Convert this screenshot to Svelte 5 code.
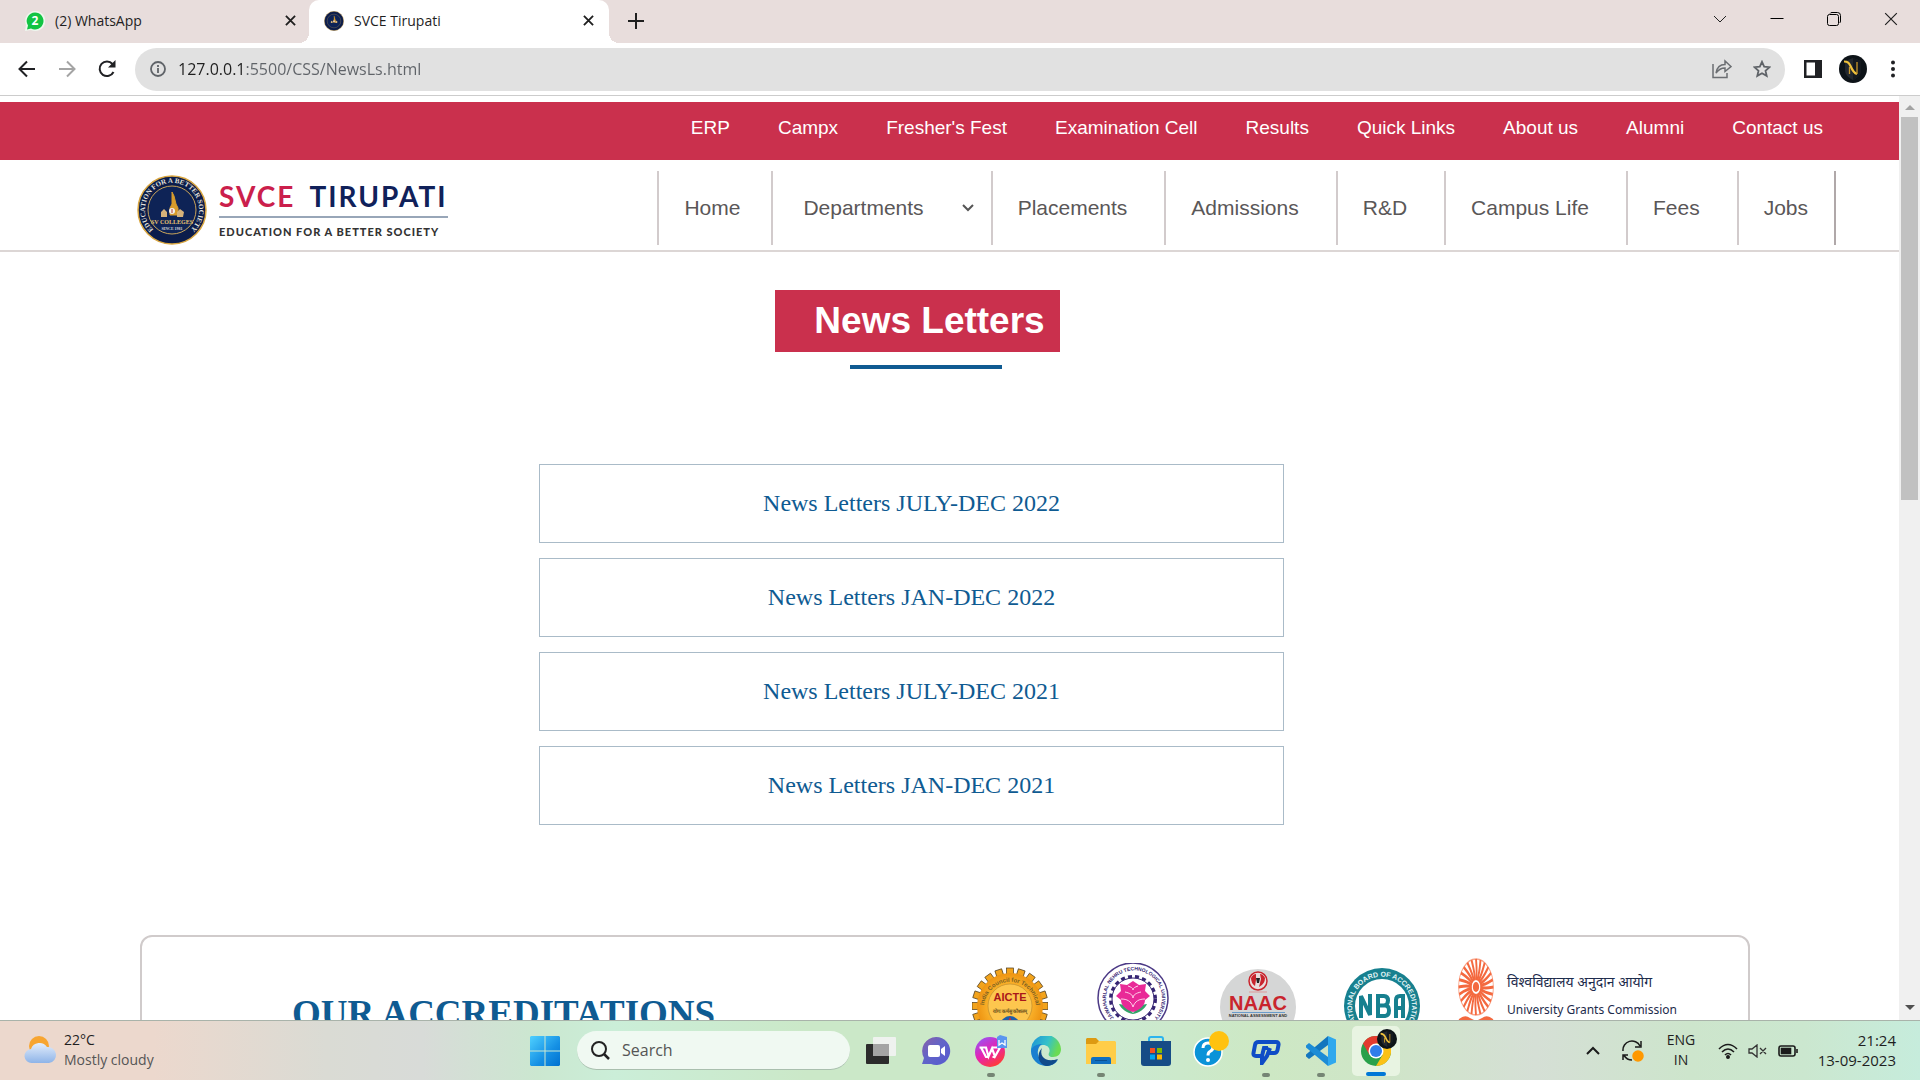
<script>
  const topLinks = ['ERP', 'Campx', "Fresher's Fest", 'Examination Cell', 'Results', 'Quick Links', 'About us', 'Alumni', 'Contact us'];
  const navLinks = ['Placements', 'Admissions', 'R&D', 'Campus Life', 'Fees'];
  const letters = ['JULY-DEC 2022', 'JAN-DEC 2022', 'JULY-DEC 2021', 'JAN-DEC 2021'];
  const rays = Array.from({ length: 24 }, (_, i) => i * 15);
  const teeth = Array.from({ length: 20 }, (_, i) => i * 18);
  let url = '127.0.0.1:5500/CSS/NewsLs.html';
</script>

{#snippet cross(s, w)}
  <svg width={s} height={s} viewBox="0 0 12 12" fill="none" stroke="currentColor" stroke-width={w}><path d="M1 1l10 10M11 1L1 11" /></svg>
{/snippet}

{#snippet badge(s)}
  <svg width={s} height={s} viewBox="0 0 28 28">
    <circle cx="14" cy="14" r="14" fill="#0d1318" />
    <path d="M14 3l8 3v9c0 5-4 8-8 10-4-2-8-5-8-10V6z" fill="#23282f" />
    <path d="M14 3l8 3v9c0 5-4 8-8 10z" fill="#14191f" />
    <path d="M5 6.500c4 0 5 1.500 6.500 4.500 1.500 3.500 3 7 6.500 8" fill="none" stroke="#f0c23c" stroke-width="2.200" />
    <path d="M10.500 19v-7M18 7v12" fill="none" stroke="#c8962a" stroke-width="1.300" />
  </svg>
{/snippet}

{#snippet emblem(s)}
  <svg width={s} height={s} viewBox="0 0 70 70" role="img" aria-label="SV Colleges emblem">
    <circle cx="35" cy="35" r="34" fill="#0b1c4b" stroke="#d9a640" stroke-width="1.500" />
    <circle cx="35" cy="35" r="24" fill="#0e2356" stroke="#c9a45a" stroke-width="1" />
    {#if s > 40}
      <defs><path id="ring" d="M16.500 54.500A27 27 0 1 1 53.500 54.500" /></defs>
      <text class="ring" font-size="7" fill="#e4e2dc"><textPath href="#ring" startOffset="50%" text-anchor="middle">EDUCATION FOR A BETTER SOCIETY</textPath></text>
      <text class="ring" x="35" y="49" font-size="6" fill="#e6c270" text-anchor="middle">SV COLLEGES</text>
      <text class="ring" x="35" y="55" font-size="4" fill="#d8d8d8" text-anchor="middle">SINCE 1981</text>
    {/if}
    <path d="M35 17l2 4 2 8 2 4v7h-8v-7l2-4 0-8z" fill="#d79b2c" stroke="#d79b2c" />
    <path d="M24 37l3-3 3 3v5h-6zM40 37l3-3 4 3-1 5h-6z" fill="#d6b27a" />
    <circle cx="35" cy="36" r="3" fill="#f3efe9" />
    <path d="M35 34v4" stroke="#b5392c" />
  </svg>
{/snippet}

<div class="window">
  <header class="tabs">
    <div class="tab first">
      <svg width="20" height="20" viewBox="0 0 20 20"><path d="M10 0a10 10 0 1 1-4 19l-6 1 1-6A10 10 0 0 1 10 0z" fill="#eef7ee" /><path d="M10 1.500a8.500 8.500 0 1 1-4 16l-4 1 1-4a8.500 8.500 0 0 1 7-13z" fill="#12c443" /><text x="10" y="14" font-size="12" font-weight="700" fill="#fff" text-anchor="middle">2</text></svg>
      <button class="tab-title">(2) WhatsApp</button>
      <button class="icon close" aria-label="Close WhatsApp tab">{@render cross(11, 2)}</button>
    </div>
    <div class="tab active">
      {@render emblem(20)}
      <button class="tab-title">SVCE Tirupati</button>
      <button class="icon close" aria-label="Close SVCE Tirupati tab">{@render cross(11, 2)}</button>
    </div>
    <button class="icon plus" aria-label="New tab"><svg width="16" height="16" viewBox="0 0 16 16" stroke="#1f1f1f" stroke-width="2"><path d="M8 0v16M0 8h16" /></svg></button>
    <div class="controls">
      <button class="icon" aria-label="Search tabs"><svg width="14" height="8" viewBox="0 0 14 8" fill="none" stroke="#222"><path d="M1 1l6 6 6-6" /></svg></button>
      <button class="icon" aria-label="Minimize"><svg width="14" height="12" viewBox="0 0 14 12" stroke="#000"><path d="M0.500 5.500h13" /></svg></button>
      <button class="icon" aria-label="Restore"><svg width="14" height="14" viewBox="0 0 14 14" fill="none" stroke="#000"><rect x=".5" y="2.500" width="11" height="11" rx="2" /><path d="M3 1.500Q3.500.5 5 .5h5.500a3 3 0 0 1 3 3V9q0 1.500-1 2" /></svg></button>
      <button class="icon" aria-label="Close window">{@render cross(14, 1)}</button>
    </div>
  </header>

  <div class="toolbar">
    <button class="icon" aria-label="Back"><svg width="18" height="18" viewBox="0 0 18 18" fill="none" stroke="#202124" stroke-width="2"><path d="M17 9H2M9 1.500L1.500 9 9 16.500" /></svg></button>
    <button class="icon" aria-label="Forward"><svg width="18" height="18" viewBox="0 0 18 18" fill="none" stroke="#a4a4a4" stroke-width="2"><path d="M1 9h15M9 1.500L16.500 9 9 16.500" /></svg></button>
    <button class="icon" aria-label="Reload"><svg width="18" height="18" viewBox="0 0 18 18" fill="none" stroke="#202124" stroke-width="2"><path d="M15.500 12A7.300 7.300 0 1 1 14.500 4L16 6" /><path d="M17.500 0v7.500H10z" fill="#202124" stroke="none" /></svg></button>
    <div class="omnibox">
      <svg width="16" height="16" viewBox="0 0 16 16" fill="none" stroke="#5f6368" stroke-width="1.800"><circle cx="8" cy="8" r="7" /><path d="M8 7v5M8 4v2" /></svg>
      <input class="url" aria-label="Address" bind:value={url} />
      <button class="icon" aria-label="Share"><svg width="20" height="20" viewBox="0 0 20 20" fill="none" stroke="#6b6e72" stroke-width="1.500"><path d="M1 5v13.500h14V14M4 14c1-6 4-8.500 9-8.500V2l6 5.500-6 5V9c-4 0-6.500 1.500-9 5z" /></svg></button>
      <button class="icon" aria-label="Bookmark"><svg width="18" height="18" viewBox="0 0 18 18" fill="none" stroke="#5f6368" stroke-width="1.800"><path d="M9 1.800l2.200 4.900 5.300.5-4 3.500 1.200 5.200L9 13.200l-4.700 2.700 1.200-5.200-4-3.500 5.300-.5z" /></svg></button>
    </div>
    <button class="icon" aria-label="Side panel"><svg width="18" height="18" viewBox="0 0 18 18"><path d="M0 0h18v18H0zM2.500 2.500v13H11v-13z" fill="#202124" fill-rule="evenodd" /></svg></button>
    <button class="icon" aria-label="Profile">{@render badge(28)}</button>
    <button class="icon" aria-label="Menu"><svg width="4" height="18" viewBox="0 0 4 18" fill="#202124"><circle cx="2" cy="2.500" r="2" /><circle cx="2" cy="9" r="2" /><circle cx="2" cy="15.500" r="2" /></svg></button>
  </div>

  <div class="viewport">
    <div class="page">
      <nav class="quick" aria-label="Quick links">
        {#each topLinks as l}<a href="#top">{l}</a>{/each}
      </nav>
      <div class="masthead">
        <a class="brand" href="#home">
          {@render emblem(70)}
          <span class="brand-text">
            <span class="brand-name"><b>SVCE</b><span>TIRUPATI</span></span>
            <span class="tagline">EDUCATION FOR A BETTER SOCIETY</span>
          </span>
        </a>
        <nav class="menu" aria-label="Main">
          <a class="home" href="#home">Home</a>
          <button class="departments"><span>Departments</span><svg width="12" height="8" viewBox="0 0 12 8" fill="none" stroke="#555" stroke-width="2"><path d="M1 1l5 5 5-5" /></svg></button>
          {#each navLinks as l}<a href="#nav">{l}</a>{/each}
          <a class="jobs" href="#jobs">Jobs</a>
        </nav>
      </div>

      <main>
        <h1>News Letters</h1>
        <hr />
        <ul>
          {#each letters as l}<li><a href="#letter">News Letters {l}</a></li>{/each}
        </ul>
      </main>

      <section class="accred">
        <h2>OUR ACCREDITATIONS</h2>
        <div class="seals">
          <svg width="76" height="90" viewBox="0 0 76 90" role="img" aria-label="AICTE">
            <defs>
              <radialGradient id="gold"><stop offset="0" stop-color="#ffe08a" /><stop offset=".6" stop-color="#fbb62e" /><stop offset="1" stop-color="#ee9412" /></radialGradient>
              <path id="aicte" d="M13 52A26 26 0 1 1 63 52" />
            </defs>
            {#each teeth as t}<rect x="34.500" y="5" width="7" height="10" fill="#f2a31c" stroke="#4b3a1c" stroke-width=".7" transform="rotate({t} 38 43)" />{/each}
            <circle cx="38" cy="43" r="33" fill="url(#gold)" />
            <circle cx="38" cy="43" r="22" fill="#fdc64e" stroke="#a77b2a" stroke-width=".5" />
            <text font-size="6" font-weight="700" fill="#7a6023"><textPath href="#aicte" startOffset="50%" text-anchor="middle">India Council for Technical</textPath></text>
            <text x="38" y="38" font-size="11" font-weight="700" fill="#a9161b" text-anchor="middle">AICTE</text>
            <text x="38" y="50" font-size="5" font-weight="700" fill="#6b521d" text-anchor="middle">योगः कर्मसु कौशलम्</text>
            <circle cx="38" cy="63" r="10" fill="#1e5fa8" /><path d="M38 54l4 9h-8z" fill="#d9262c" />
          </svg>
          <svg width="76" height="90" viewBox="0 0 76 90" role="img" aria-label="Jawaharlal Nehru Technological University">
            <defs><path id="jntu" d="M19 56A28 28 0 1 1 57 56" /></defs>
            <circle cx="37" cy="35" r="35" fill="#fff" stroke="#4c3a86" stroke-width="1.500" />
            <text font-size="5" font-weight="700" fill="#352573"><textPath href="#jntu" startOffset="50%" text-anchor="middle">JAWAHARLAL NEHRU TECHNOLOGICAL UNIVERSITY</textPath></text>
            <circle cx="37" cy="36" r="22" fill="none" stroke="#352573" stroke-width="4" stroke-dasharray="4 3" />
            <circle cx="37" cy="36" r="21" fill="#fff" stroke="#352573" />
            <path d="M23 41c5 0 10 4 14 9 4-5 9-9 14-9-2 5-8 9-14 10-6-1-12-5-14-10z" fill="#35a36a" />
            <path d="M37 18l6 4 7-1-1 7 5 5-5 4c0 6-6 10-12 12-6-2-12-6-12-12l-5-4 5-5-1-7 7 1z" fill="#e92a97" />
            <path d="M29 29c5 1 8 3 8 6 0-3 3-5 8-6M25 36c6 0 10 2 12 8 2-6 6-8 12-8M32 23c3 1 5 2 5 4 0-2 2-3 5-4" fill="none" stroke="#ffd0ea" />
          </svg>
          <svg width="76" height="90" viewBox="0 0 76 90" role="img" aria-label="NAAC">
            <circle cx="38" cy="44" r="38" fill="#d5d6d6" />
            <circle cx="38" cy="18" r="9" fill="#e9dcdc" stroke="#c9242d" stroke-width="1.500" /><path d="M31 15q2-4 5-4v6l-1 6q-4-3-4-8zM45 15q-2-4-5-4l1 5-2 8q6-3 6-9z" fill="#c9242d" /><path d="M36 15h4l-1 5h-2z" fill="#222" />
            <path d="M29 29h18" stroke="#d99" />
            <text x="38" y="47" font-size="20" font-weight="700" fill="#c9242d" text-anchor="middle" class="plain">NAAC</text>
            <path d="M12 49.500h53" stroke="#6a9cc9" />
            <text x="38" y="54" font-size="4" font-weight="700" fill="#333" text-anchor="middle">NATIONAL ASSESSMENT AND</text>
            <text x="38" y="60" font-size="4" font-weight="700" fill="#333" text-anchor="middle">ACCREDITATION COUNCIL</text>
          </svg>
          <svg width="76" height="90" viewBox="0 0 76 90" role="img" aria-label="National Board of Accreditation">
            <defs><path id="nba" d="M16 64A30 30 0 1 1 60 64" /></defs>
            <circle cx="38" cy="43" r="38" fill="#17808f" /><circle cx="38" cy="43" r="27" fill="#fff" />
            <text font-size="7" font-weight="700" fill="#e6f5f6"><textPath href="#nba" startOffset="50%" text-anchor="middle">NATIONAL BOARD OF ACCREDITATION</textPath></text>
            <path d="M17 55V33l9 19V31M34 53V33h6q4 0 4 4.500T40 42.500h-6 7q4 0 4 5T41 53h-7zM52 55V37q0-4 4-4h3v22M52 45h7" fill="none" stroke="#17808f" stroke-width="4" />
          </svg>
        </div>
        <div class="ugc">
          <svg width="42" height="72" viewBox="0 0 42 72" aria-hidden="true">
            <g stroke="#f4693f" fill="none" transform="translate(21 30) scale(.62 1)">
              <circle r="28" stroke-width="1.500" stroke="#f9a68c" />
              {#each rays as r}<path d="M0-7C2-14 1-20 0-28" stroke-width="3" transform="rotate({r})" />{/each}
              <circle r="5" fill="#f4693f" stroke="none" />
            </g>
            <path d="M4 62q6-5 11-1l6 3 6-3q5-4 11 1l3 10H1z" fill="#f4693f" />
          </svg>
          <p><span lang="hi">विश्वविद्यालय अनुदान आयोग</span><span class="en">University Grants Commission</span></p>
        </div>
      </section>
    </div>
    <div class="scrollbar">
      <i class="up"></i><span class="thumb"></span><i class="down"></i>
    </div>
  </div>

  <footer class="taskbar">
    <button class="weather">
      <svg width="34" height="32" viewBox="0 0 34 32"><defs><linearGradient id="cl" x2="0" y2="1"><stop stop-color="#e4eefc" /><stop offset="1" stop-color="#8eb4e8" /></linearGradient></defs><circle cx="15" cy="12" r="10" fill="#f7a531" /><path d="M8 29a7 7 0 0 1-1-14 9 9 0 0 1 16-2 8 8 0 0 1 2 16z" fill="url(#cl)" /></svg>
      <span>22°C<br /><small>Mostly cloudy</small></span>
    </button>
    <div class="dock">
      <button class="icon start" aria-label="Start"><svg width="30" height="30" viewBox="0 0 30 30"><defs><linearGradient id="win" x2="1" y2="1"><stop stop-color="#4fd0ff" /><stop offset=".6" stop-color="#1590e4" /><stop offset="1" stop-color="#0070cf" /></linearGradient></defs><path d="M1 0h13.500v14.500H0V1zM15.500 0H29l1 1v13.500H15.500zM0 15.500h14.500V30H1l-1-1zM15.500 15.500H30V29l-1 1H15.500z" fill="url(#win)" /></svg></button>
      <label class="search">
        <svg width="19" height="19" viewBox="0 0 19 19" fill="none" stroke="#222" stroke-width="2"><circle cx="8" cy="8" r="7" /><path d="M13 13l5 5" stroke-width="2.500" /></svg>
        <input placeholder="Search" aria-label="Search" />
      </label>
      <button class="icon app" aria-label="Task view"><svg width="30" height="30" viewBox="0 0 30 30"><rect y="8" width="23" height="20" rx="1" fill="#2c2c2c" /><rect x="7" y="1" width="23" height="19" rx="1" fill="#f3f3f3" opacity=".9" /><path d="M7 8h16v12H7z" fill="#a4a4a4" /></svg></button>
      <button class="icon app" aria-label="Chat"><svg width="30" height="30" viewBox="0 0 30 30"><defs><linearGradient id="chat" x2="1" y2="1"><stop stop-color="#8a5fa8" /><stop offset=".45" stop-color="#6264c8" /><stop offset="1" stop-color="#5558d0" /></linearGradient></defs><path d="M15 1a14 14 0 1 1-5 27H1l2-6A14 14 0 0 1 15 1z" fill="url(#chat)" /><rect x="7" y="9" width="12" height="12" rx="2" fill="#fff" /><path d="M20 13l4-3v10l-4-3z" fill="#fff" /></svg></button>
      <button class="icon app run" aria-label="WPS Office"><svg width="32" height="32" viewBox="0 0 32 32"><defs><linearGradient id="wps" x2=".6" y2="1"><stop stop-color="#8a5cff" /><stop offset=".55" stop-color="#e423b4" /><stop offset="1" stop-color="#ff3b3b" /></linearGradient></defs><circle cx="15" cy="17" r="15" fill="url(#wps)" /><path d="M4.500 12.500H11l2.500 9 3.500-8 3 8 5-9h-8M6 12.500l5 9.500h2.500M20 22h-2.500" fill="none" stroke="#fff" stroke-width="2.200" /><path d="M22 2l3-2 7 2v11H22z" fill="#5a95f0" /><path d="M24 5v5l3-2 3 2V5" fill="none" stroke="#fff" stroke-width="1.300" /></svg></button>
      <button class="icon app" aria-label="Edge"><svg width="30" height="30" viewBox="0 0 30 30"><defs><linearGradient id="eg" x2="1" y2=".3"><stop stop-color="#1b8fd8" /><stop offset=".6" stop-color="#35c1c9" /><stop offset="1" stop-color="#6bdb52" /></linearGradient></defs><path d="M0 15A15 15 0 0 1 30 13c0 5-3 8-8 8-4 0-5-2-4-4 2-4-1-8-6-8C6 9 1 12 0 17z" fill="url(#eg)" /><path d="M0 15c1-5 6-7 11-7-5 3-7 14 3 18 5 2 9 1 13-2-3 4-7 6-12 6A15 15 0 0 1 0 15z" fill="#1a7fd0" /><path d="M11 12c-3 8 3 15 16 11-3 5-7 7-12 7-8-2-10-12-4-18z" fill="#114a8b" /></svg></button>
      <button class="icon app run" aria-label="File Explorer"><svg width="30" height="28" viewBox="0 0 30 28"><path d="M1 1h9l3 3h16v6H0V2z" fill="#dd9a12" /><path d="M13 4h16l1 1v22H0V7h10z" fill="#ffcd48" /><path d="M5 27v-5q0-2 2-2h16q2 0 2 2v5z" fill="#0f6fc0" /><path d="M9 23.500h12" stroke="#0a4f90" /></svg></button>
      <button class="icon app" aria-label="Microsoft Store"><svg width="30" height="30" viewBox="0 0 30 30"><path d="M8 6V3q0-2 2-2h10q2 0 2 2v3" fill="none" stroke="#2cb4ee" stroke-width="2" /><path d="M0 5h30v22q0 3-3 3H3q-3 0-3-3z" fill="#164c86" /><path d="M9 12h5v5H9z" fill="#f25022" /><path d="M16 12h5v5h-5z" fill="#7fba00" /><path d="M9 18.500h5v5H9z" fill="#00a4ef" /><path d="M16 18.500h5v5h-5z" fill="#ffb900" /></svg></button>
      <button class="icon app help" aria-label="Help"><svg width="36" height="36" viewBox="0 0 36 36"><circle cx="15" cy="21" r="14" fill="#0a93d8" stroke="#fff" stroke-width="1.500" /><path d="M10 17q0-5 5-5t5 4q0 3-3 4.500-2 1-2 4" fill="none" stroke="#fff" stroke-width="3" /><circle cx="15" cy="29" r="2" fill="#fff" /><circle cx="26" cy="10" r="10" fill="#ffc20f" /></svg></button>
      <button class="icon app run" aria-label="Presentation tool"><svg width="30" height="28" viewBox="0 0 30 28" fill="none" stroke="#0e4cc6" stroke-width="4"><path d="M17 11h-4l-2 8H5q-3 0-2.500-3l1.500-8q.5-3 3.500-3H25q3 0 2.500 3l-1 5q-.5 3-3.500 3h-6M19 11l-3 8-5 7v-7" /></svg></button>
      <button class="icon app run" aria-label="VS Code"><svg width="30" height="30" viewBox="0 0 30 30"><path d="M22 0l8 3.500v23L22 30z" fill="#2fa8ee" /><path d="M22 0v9L3 23l-3-2.500v-2z" fill="#1376be" /><path d="M22 30v-9L3 7 0 9.500v2z" fill="#1c8cd6" /></svg></button>
      <button class="icon app current" aria-label="Chrome"><span class="stack"><svg width="30" height="30" viewBox="0 0 30 30"><circle cx="15" cy="15" r="15" fill="#2aa14b" /><path d="M2 7.500A15 15 0 0 1 28 7.500H15L8.500 19z" fill="#e33b2e" /><path d="M28 7.500A15 15 0 0 1 15 30l6.500-11L15 7.500z" fill="#fbc116" /><circle cx="15" cy="15" r="7.500" fill="#fff" /><circle cx="15" cy="15" r="6" fill="#2f7de9" /></svg><span class="mark">{@render badge(20)}</span></span></button>
    </div>
    <div class="tray">
      <button class="icon caret" aria-label="Hidden icons"><svg width="14" height="9" viewBox="0 0 14 9" fill="none" stroke="#1b1b1b" stroke-width="2"><path d="M1 8l6-6 6 6" /></svg></button>
      <button class="icon sync" aria-label="Updates"><svg width="22" height="22" viewBox="0 0 22 22" fill="none" stroke="#1b1b1b" stroke-width="1.500"><path d="M1 11A9 9 0 0 1 18 6M19 1v6h-6M10 20q-5 0-8-4.500M1 20v-5h5" /><circle cx="16" cy="16" r="5" fill="#ff9800" stroke="#ff9800" /></svg></button>
      <button class="lang">ENG<br />IN</button>
      <button class="status" aria-label="Network, sound and battery">
        <svg width="20" height="16" viewBox="0 0 20 16" fill="none" stroke="#1b1b1b" stroke-width="1.600"><path d="M1 6q9-9 18 0M4 9q6-6 12 0M7 12q3-3 6 0" /><circle cx="10" cy="14" r="1.200" fill="#1b1b1b" /></svg>
        <svg width="20" height="14" viewBox="0 0 20 14" fill="none" stroke="#333" stroke-width="1.300"><path d="M1 5v4h3l5 4V1L4 5zM12 4l6 6M18 4l-6 6" /></svg>
        <svg width="20" height="12" viewBox="0 0 20 12" fill="none" stroke="#1b1b1b" stroke-width="1.600"><rect x="1" y="1" width="16" height="10" rx="2" /><rect x="3.500" y="3.500" width="9" height="5" fill="#1b1b1b" /><path d="M19 4v4" /></svg>
      </button>
      <button class="clock">21:24<br />13-09-2023</button>
    </div>
  </footer>
</div>

<style>
  :global(body) { margin: 0; background: #fff; }
  .window { display: flex; flex-direction: column; height: 100vh; overflow: hidden; font-family: "Open Sans", "Noto Sans", sans-serif; color: #1f1f1f; }
  button { padding: 0; border: 0; background: none; font: inherit; color: inherit; }
  a { color: inherit; text-decoration: none; }
  svg { display: block; flex: none; }
  .icon { display: flex; align-items: center; justify-content: center; flex: none; width: 40px; height: 34px; }
  .ring { font-family: "Liberation Serif", serif; font-weight: 700; }
  .plain { font-family: "Liberation Sans", sans-serif; }

  .tabs { display: flex; height: 43px; flex: none; background: #e8dddc; }
  .tab { position: relative; display: flex; align-items: center; box-sizing: border-box; width: 300px; padding: 0 7px 2px 15px; font-size: 14px; }
  .tab.first { width: 309px; padding-left: 25px; padding-right: 5px; }
  .tab-title { flex: 1; text-align: left; padding-left: 10px; }
  .close { width: 28px; }
  .active { background: #fff; border-radius: 10px 10px 0 0; }
  .active::before, .active::after { content: ""; position: absolute; bottom: 0; width: 10px; height: 10px; }
  .active::before { left: -10px; background: radial-gradient(circle at 0 0, #e8dddc 10px, #fff 10px); }
  .active::after { right: -10px; background: radial-gradient(circle at 100% 0, #e8dddc 10px, #fff 10px); }
  .plus { margin: 4px 0 0 7px; }
  .controls { display: flex; margin: 2px 1px 0 auto; }
  .controls .icon { width: 57px; }

  .toolbar { display: flex; align-items: center; flex: none; height: 52px; padding: 0 7px; border-bottom: 1px solid #ccc; }
  .omnibox { display: flex; align-items: center; flex: 1; height: 43px; margin: 0 8px; padding: 0 3px 0 15px; border-radius: 22px; background: #e1e1e1; }
  .url { flex: 1; min-width: 0; margin-left: 12px; padding: 0; border: 0; outline: 0; font: 16px "Open Sans", sans-serif; color: #5f6368; background: linear-gradient(to right, #1f1f1f 68px, #5f6368 68px); background-clip: text; -webkit-background-clip: text; -webkit-text-fill-color: transparent; }

  .viewport { display: flex; flex: 1; min-height: 0; }
  .page { flex: 1; min-width: 0; padding-top: 6px; overflow: hidden; font-family: "Liberation Sans", Arial, sans-serif; }
  .quick { display: flex; justify-content: flex-end; gap: 48px; height: 43px; padding: 15px 76px 0 0; background: #ca304d; color: #fff; font-size: 19px; line-height: 22px; }
  .masthead { display: flex; justify-content: space-between; padding: 11px 63px 5px 137px; border-bottom: 2px solid #dcd6d5; }
  .brand { display: flex; align-items: center; gap: 12px; padding-top: 4px; }
  .brand-text { display: flex; flex-direction: column; font-family: Lato, sans-serif; }
  .brand-name { display: flex; gap: 14px; padding-bottom: 4px; border-bottom: 2px solid #98a6b8; font-size: 28px; font-weight: 700; line-height: 32px; letter-spacing: 2px; color: #10215a; }
  .brand-name b { font-weight: 700; color: #cb1f4c; }
  .tagline { padding-top: 6px; font-size: 11px; font-weight: 900; line-height: 16px; letter-spacing: 1px; color: #333; }
  .menu { display: flex; color: #5a5758; font-size: 21px; line-height: 74px; }
  .menu a, .menu button { border-left: 2px solid #d2cbcc; padding: 0 37px 0 25px; }
  .menu .home { padding-right: 31px; }
  .menu .departments { display: flex; gap: 38px; padding: 0 17px 0 30px; }
  .departments svg { align-self: center; }
  .menu .jobs { padding-right: 26px; border-right: 2px solid #b0a8a9; }

  main { display: flex; flex-direction: column; align-items: center; padding: 38px 76px 110px 0; }
  h1 { margin: 0 0 13px 12px; padding: 0 15px 0 39px; background: #ca304d; color: #fff; font-size: 37px; line-height: 62px; }
  hr { width: 152px; height: 4px; margin: 0 0 95px 29px; border: 0; background: #0f5b92; }
  ul { display: grid; gap: 15px; width: 100%; max-width: 745px; margin: 0; padding: 0; list-style: none; }
  li a { display: block; border: 1px solid #aabbc8; text-align: center; color: #0f5b92; font: 24px/77px "Liberation Serif", "Times New Roman", serif; }

  .accred { display: flex; margin: 0 149px 0 140px; padding: 20px 66px 60px 150px; border: 2px solid #d0cbcb; border-radius: 12px; }
  h2 { margin: 36px auto 0 0; color: #0f5b92; font: bold 37px/42px "Liberation Serif", "Times New Roman", serif; white-space: nowrap; }
  .seals { display: flex; gap: 48px; padding-top: 6px; margin-right: 35px; }
  .ugc { display: flex; gap: 10px; width: 227px; color: #1d2b4c; }
  .ugc p { display: flex; flex-direction: column; margin: 11px 0 0; font: 14px/28px "Noto Sans", sans-serif; white-space: nowrap; }
  .ugc .en { font-size: 12px; }

  .scrollbar { display: flex; flex-direction: column; align-items: center; flex: none; width: 21px; background: #f0f0f0; }
  .scrollbar i { width: 0; border: 5px solid transparent; }
  .scrollbar .up { margin-top: 4px; border-bottom-color: #a3a3a3; }
  .scrollbar .down { margin: auto 0 5px; border-top-color: #505050; }
  .thumb { width: 17px; height: 41.500%; margin-top: 7px; background: #c1c1c1; }

  .taskbar { display: grid; grid-template-columns: 1fr auto 1fr; align-items: center; flex: none; height: 59px; padding: 0 14px 0 24px; border-top: 1px solid #a9b3aa; background: linear-gradient(to right, #ecd8cd 0, #ecd8cd 8%, #dadbd4 17%, #d8dbd8 22%, #cbe7d0 28%, #cbeed8 32%, #cbe8c8 42%, #cbe8c8 50%, #cbead2 57%, #cde8c4 66%, #cfe5c8 72%, #d5dfd5 80%, #cde5cc 88%, #cbe7cf 94%, #c6ecdc 100%); font-size: 14px; line-height: 20px; }
  .weather { display: flex; align-items: center; gap: 6px; padding-bottom: 2px; text-align: left; justify-self: start; }
  .weather small { font-size: 14px; color: #555; }
  .dock { display: flex; align-items: center; }
  .start { width: 30px; margin-right: 17px; }
  .search { display: flex; align-items: center; gap: 12px; box-sizing: border-box; width: 273px; height: 39px; margin-right: 3px; padding: 0 14px; border-radius: 20px; border-bottom: 1px solid #a9bfae; background: #f0f9f2; }
  .search input { flex: 1; min-width: 0; padding: 0; border: 0; background: none; outline: 0; font: 16px "Open Sans", sans-serif; }
  .search input::placeholder { color: #555; opacity: 1; }
  .app { position: relative; width: 55px; height: 50px; }
  .help { padding-bottom: 4px; }
  .run::after, .current::after { content: ""; position: absolute; left: 50%; bottom: -1px; width: 8px; height: 4px; border-radius: 2px; background: #758574; transform: translateX(-50%); }
  .current { width: 48px; margin-left: 4px; border-radius: 5px; background: #e8f4e2; }
  .current::after { width: 20px; bottom: 0; background: #0078d7; }
  .stack { position: relative; }
  .mark { position: absolute; top: -7px; right: -6px; }
  .tray { display: flex; align-items: center; justify-self: end; }
  .caret { width: 42px; }
  .sync { width: 38px; }
  .lang { width: 58px; padding-bottom: 2px; text-align: center; }
  .status { display: flex; align-items: center; gap: 10px; padding: 0 18px 0 8px; }
  .clock { width: 80px; margin-right: 10px; padding-bottom: 2px; font-size: 15px; text-align: right; white-space: nowrap; }
</style>
